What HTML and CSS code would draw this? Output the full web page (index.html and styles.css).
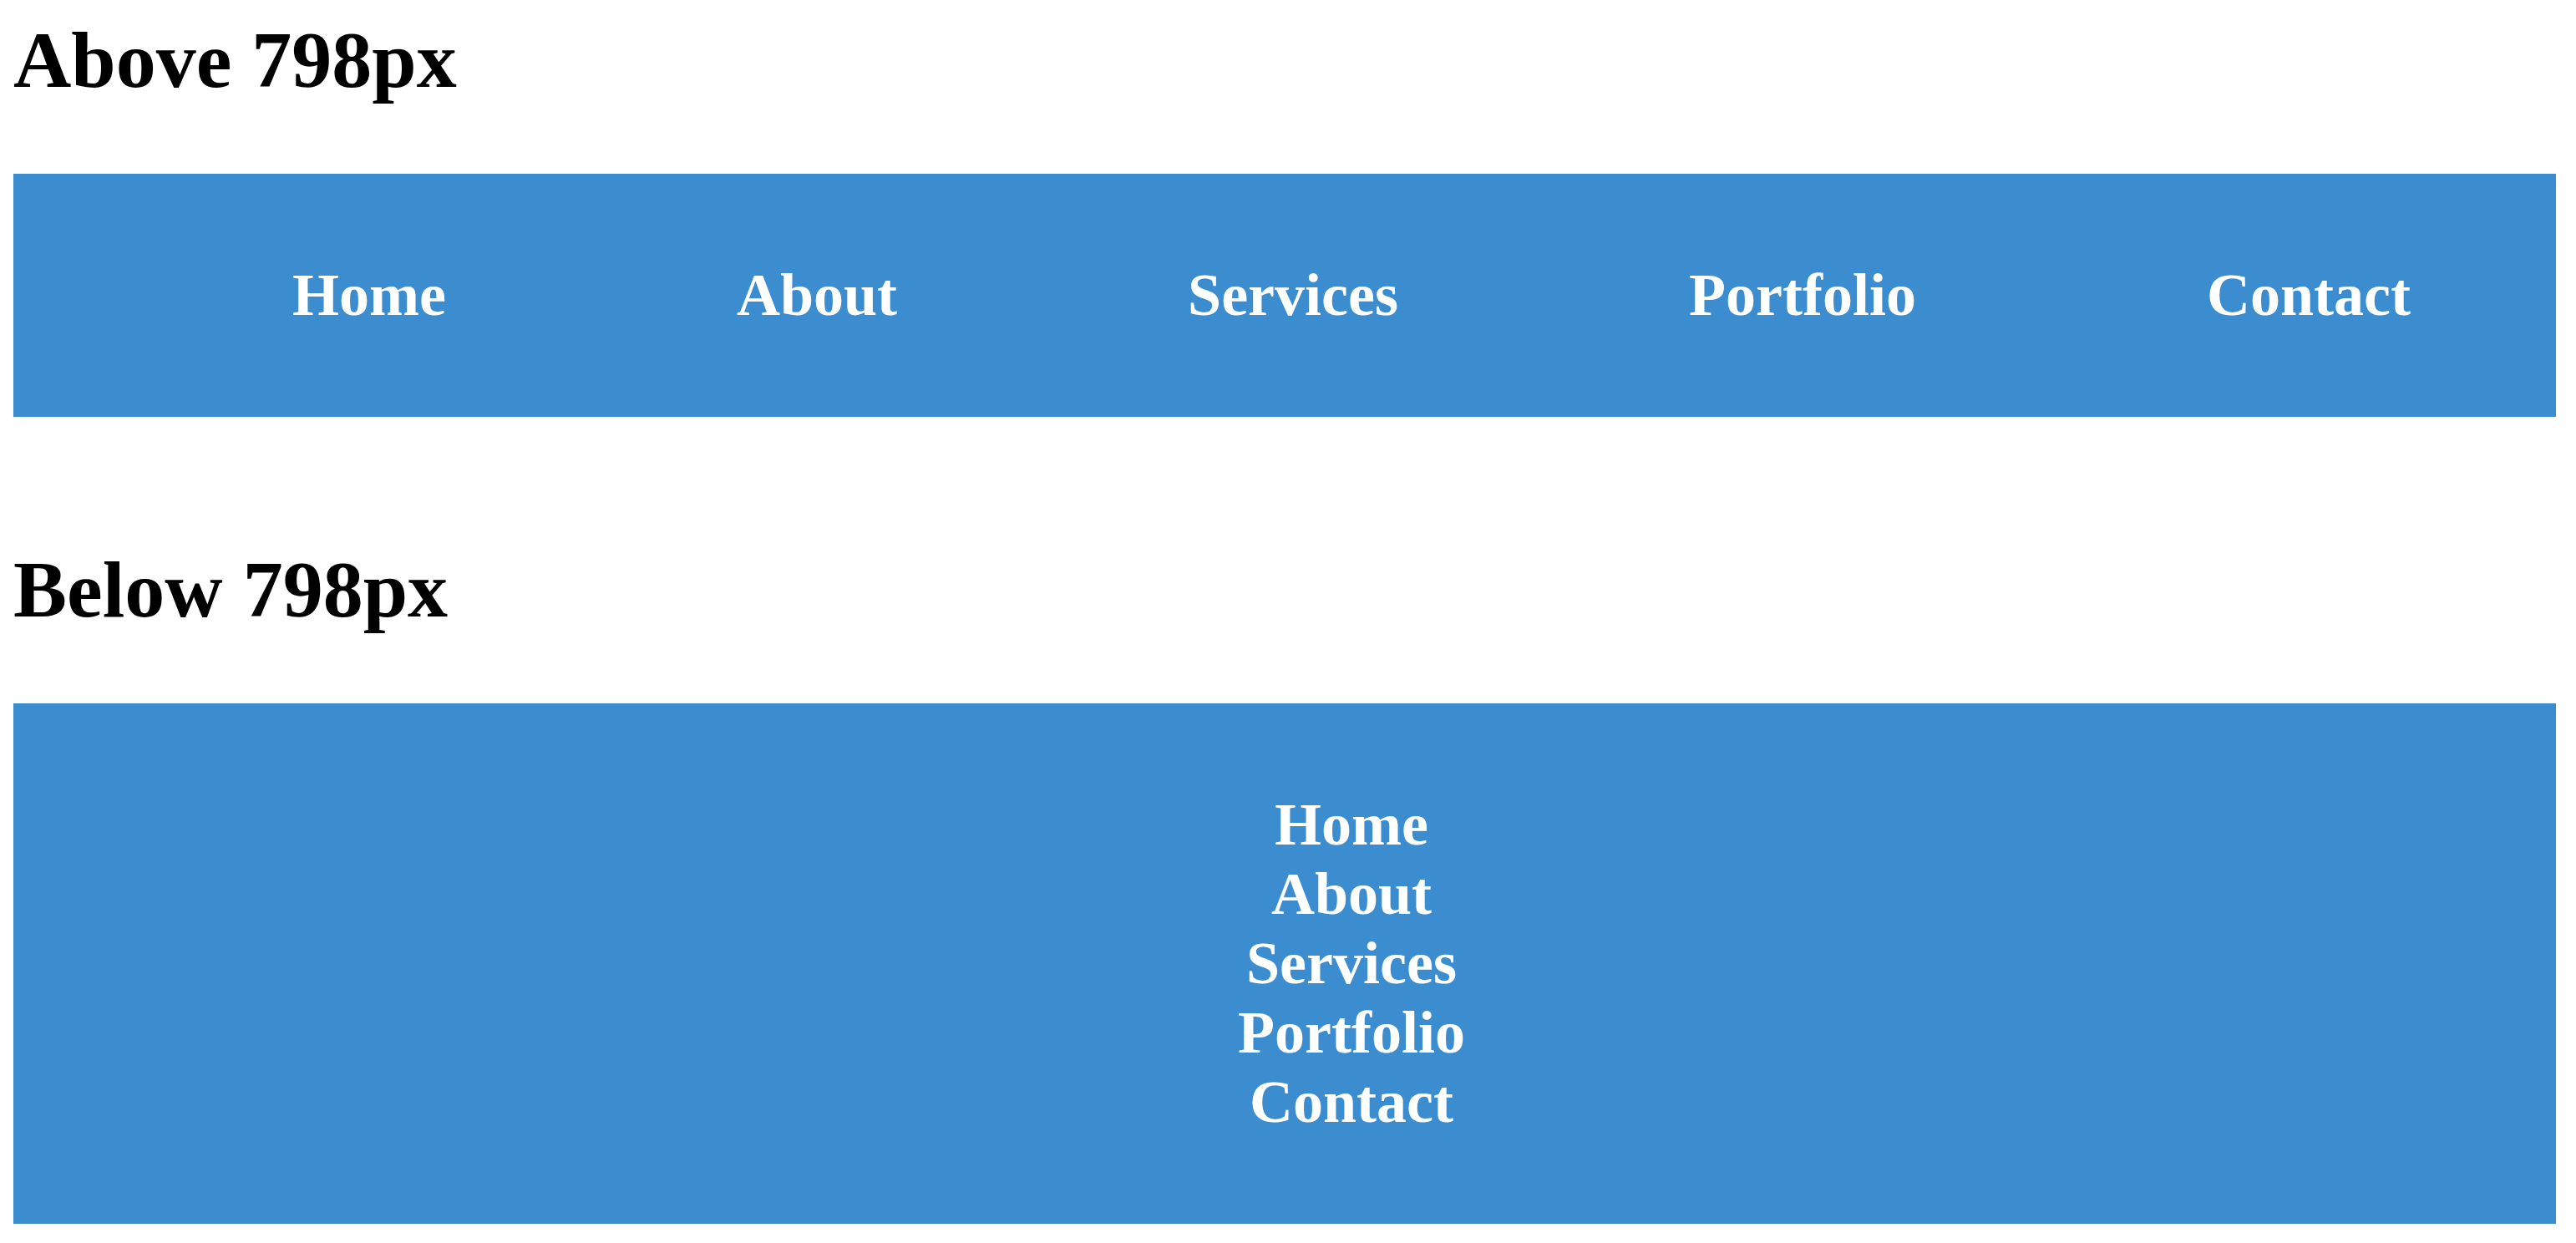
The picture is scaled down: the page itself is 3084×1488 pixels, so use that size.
FILE: index.html
```html
<!DOCTYPE html>
<html lang="en">
<head>
<meta charset="utf-8">
<title>Responsive navigation</title>
<link rel="stylesheet" href="styles.css">
</head>
<body>
<main class="page">
<section class="example">
<h1 class="heading">Above 798px</h1>
<nav class="nav">
<ul class="menu menu-row">
<li><a class="link" href="#home">Home</a></li>
<li><a class="link" href="#about">About</a></li>
<li><a class="link" href="#services">Services</a></li>
<li><a class="link" href="#portfolio">Portfolio</a></li>
<li><a class="link" href="#contact">Contact</a></li>
</ul>
</nav>
</section>
<section class="example">
<h1 class="heading">Below 798px</h1>
<nav class="nav">
<ul class="menu menu-column">
<li><a class="link" href="#home">Home</a></li>
<li><a class="link" href="#about">About</a></li>
<li><a class="link" href="#services">Services</a></li>
<li><a class="link" href="#portfolio">Portfolio</a></li>
<li><a class="link" href="#contact">Contact</a></li>
</ul>
</nav>
</section>
</main>
</body>
</html>
```

FILE: styles.css
```css
body {
  margin: 0;
  background: #fff;
  color: #000;
  font-family: "Liberation Serif", "Times New Roman", serif;
}

.page {
  display: flex;
  flex-direction: column;
  gap: 153px;
  padding: 18px 24px 22px 16px;
}

.heading {
  margin: 0 0 82px;
  font-size: 96px;
  line-height: 108px;
}

.nav {
  padding: 104px 0;
  background: #3c8dd0;
}

.menu {
  display: flex;
  margin: 0;
  padding: 0 0 0 160px;
  list-style: none;
  font-size: 72px;
  font-weight: bold;
  line-height: 83px;
}

.menu-row {
  justify-content: space-around;
}

.menu-column {
  flex-direction: column;
  align-items: center;
}

.link {
  color: #fff;
  text-decoration: none;
}
```
